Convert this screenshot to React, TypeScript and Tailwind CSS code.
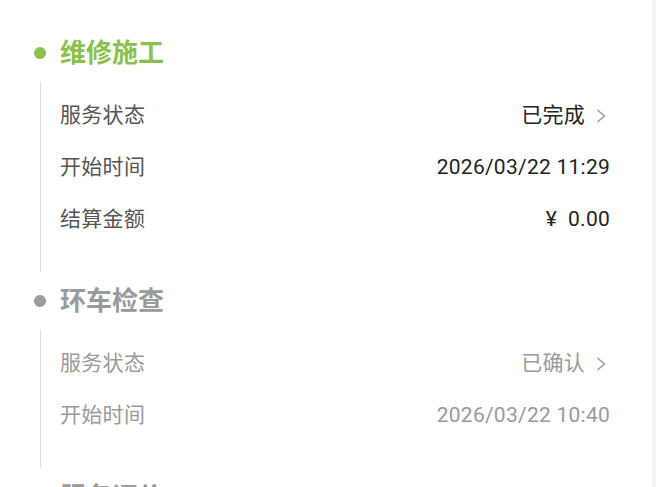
const font = { fontFamily: 'Roboto, "Noto Sans CJK SC", sans-serif' };

type Row = { label: string; value: string; link?: boolean };

const Chevron = ({ color }: { color: string }) => (
  <svg width="14" height="14" viewBox="0 0 14 14" className="ml-[11px]">
    <path d="M1.5 1 L8.5 7 L1.5 13" fill="none" stroke={color} strokeWidth="1.5" />
  </svg>
);

const Value = ({ text }: { text: string }) => {
  // yuan sign has a wider gap in front of the amount
  if (text.startsWith("¥")) {
    return (
      <>
        <span>¥</span>
        <span className="ml-[11px]">{text.slice(1).trim()}</span>
      </>
    );
  }
  return <span>{text}</span>;
};

const Section = ({
  title,
  rows,
  active,
}: {
  title: string;
  rows: Row[];
  active: boolean;
}) => {
  const labelColor = active ? "text-[#555555]" : "text-[#9a9a9a]";
  const valueColor = active ? "text-[#222222]" : "text-[#9a9a9a]";
  return (
    <div>
      <div className="flex h-[30px] items-center pl-[34px]">
        <span
          className={`h-3 w-3 rounded-full ${active ? "bg-[#8cc04a]" : "bg-[#9a9a9a]"}`}
        />
        <span
          className={`ml-[14px] text-[26px] font-bold leading-none ${active ? "text-[#8cc04a]" : "text-[#9a9a9a]"}`}
        >
          {title}
        </span>
      </div>
      {rows.length > 0 && (
        <div className="ml-10 mt-[14px] mb-[14px] border-l border-[#dddddd] pl-[19px] pr-[42px] pt-2 pb-[26px]">
          {rows.map((r) => (
            <div key={r.label} className="flex h-[52px] items-center justify-between text-[21px]">
              <span className={`tracking-[0.3px] ${labelColor}`}>{r.label}</span>
              <span className={`flex items-center tracking-[0.25px] ${valueColor}`}>
                <Value text={r.value} />
                {r.link && <Chevron color="#999999" />}
              </span>
            </div>
          ))}
        </div>
      )}
    </div>
  );
};

export default function App() {
  return (
    <div className="flex h-[487px] w-[656px] overflow-hidden bg-white" style={font}>
      <div className="w-[652px] bg-white pt-[38px]">
        <Section
          title="维修施工"
          active
          rows={[
            { label: "服务状态", value: "已完成", link: true },
            { label: "开始时间", value: "2026/03/22 11:29" },
            { label: "结算金额", value: "¥ 0.00" },
          ]}
        />
        <Section
          title="环车检查"
          active={false}
          rows={[
            { label: "服务状态", value: "已确认", link: true },
            { label: "开始时间", value: "2026/03/22 10:40" },
          ]}
        />
        <Section title="服务评价" active={false} rows={[]} />
      </div>
      <div className="flex-1 bg-[#f5f5f5]" />
    </div>
  );
}
